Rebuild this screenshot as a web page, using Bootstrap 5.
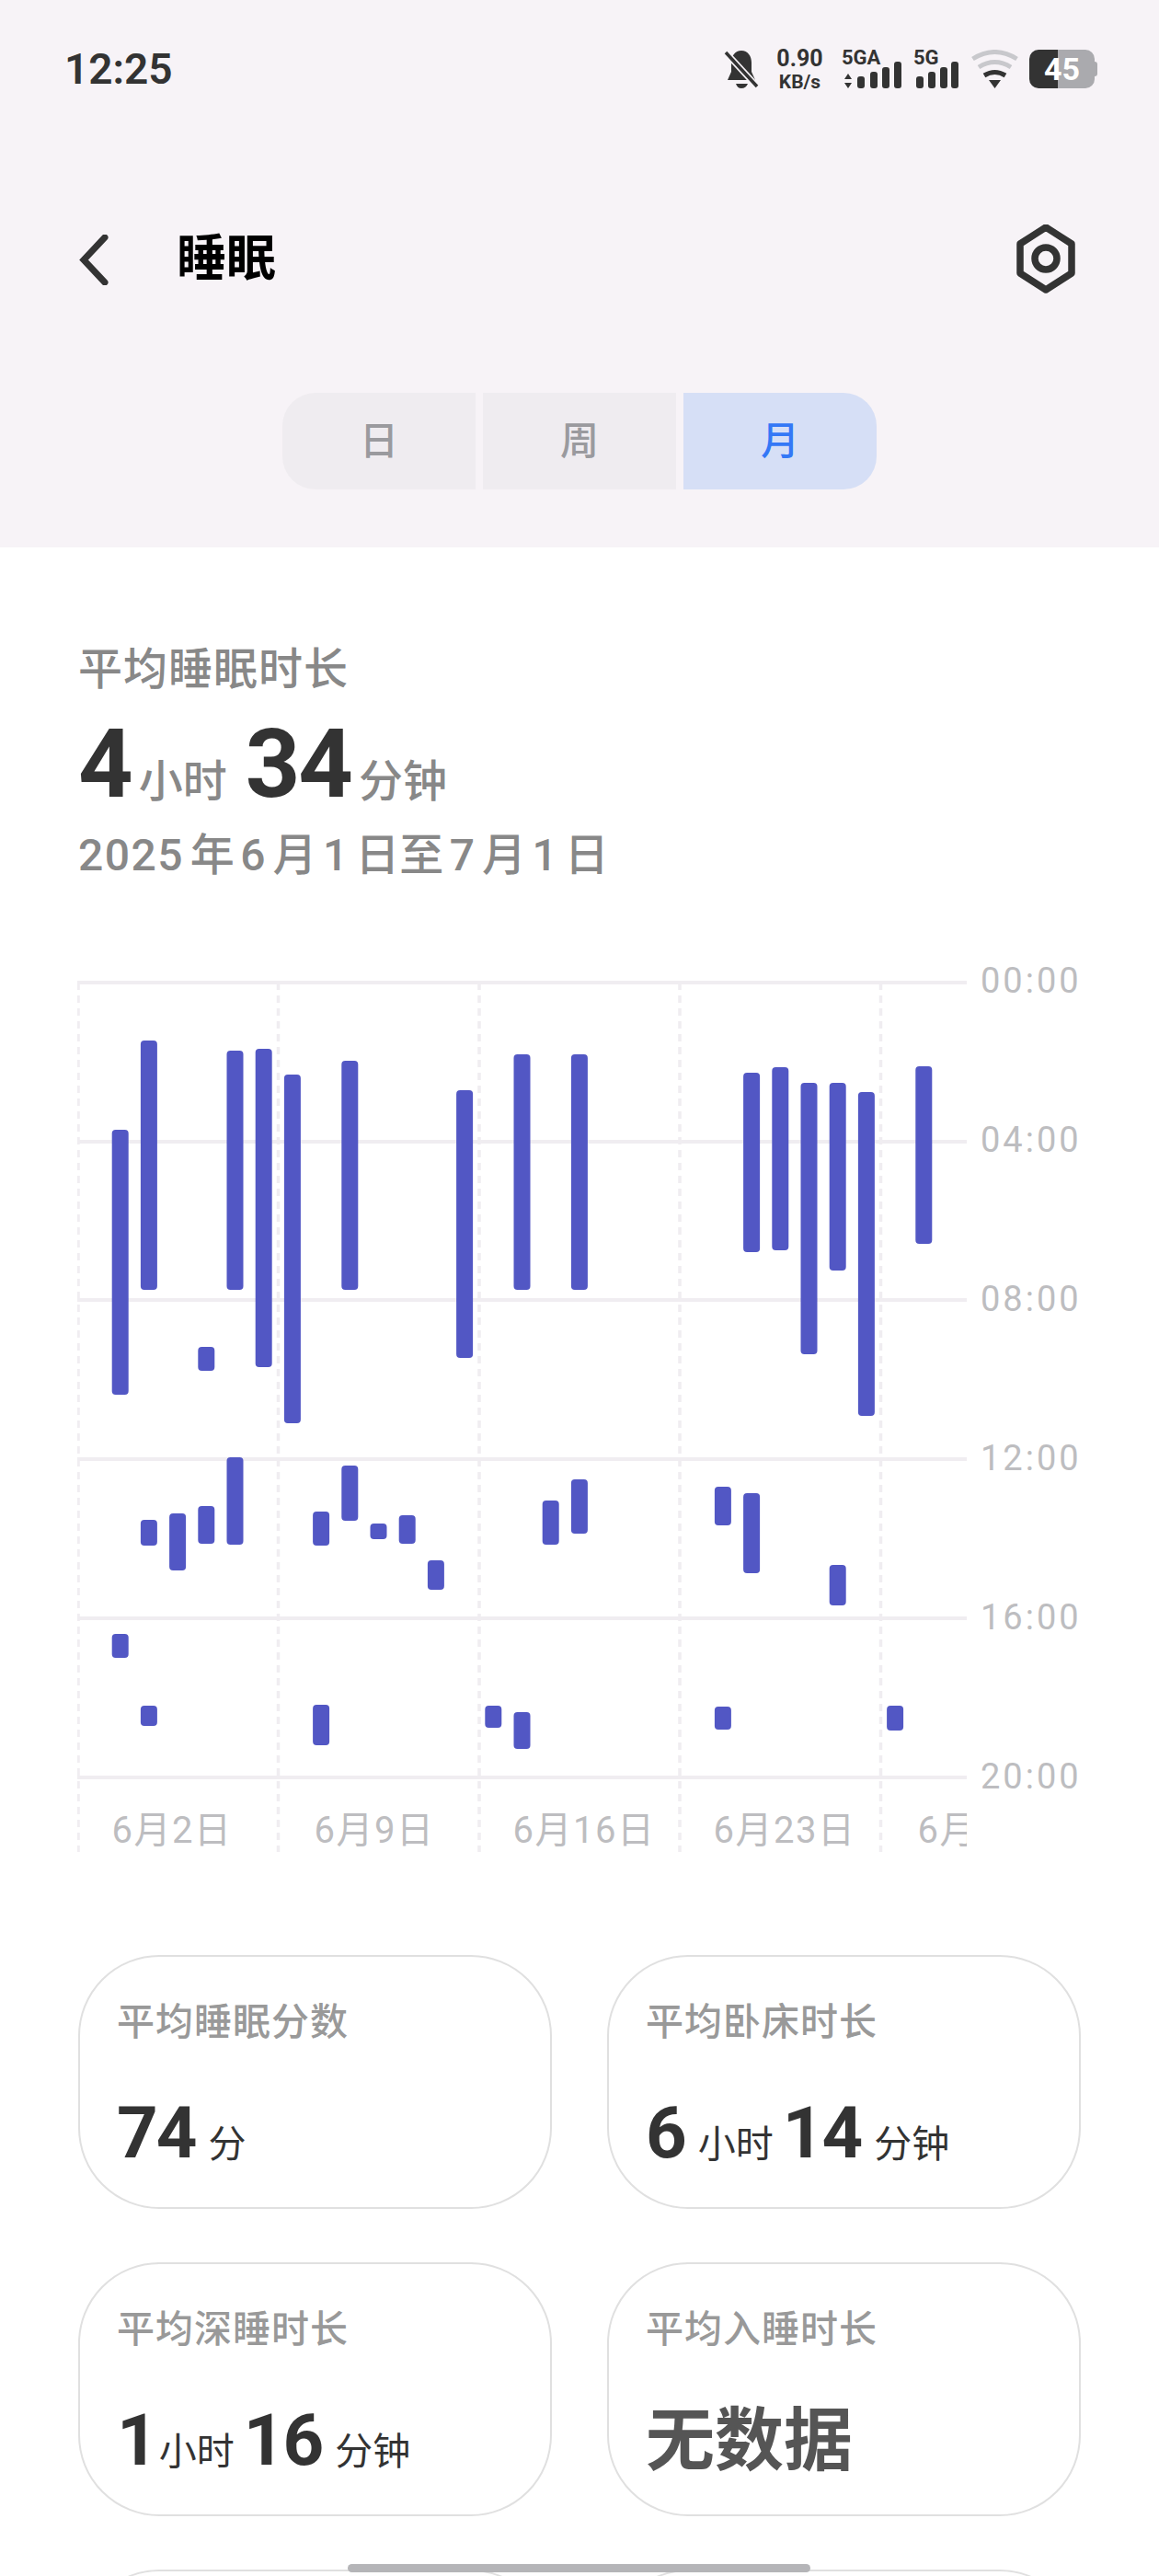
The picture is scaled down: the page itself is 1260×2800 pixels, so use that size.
<!DOCTYPE html>
<html lang="zh-CN">
<head>
    <meta charset="UTF-8">
    <meta name="viewport" content="width=device-width, initial-scale=1.0">
    <title>睡眠</title>
    <link href="https://cdn.jsdelivr.net/npm/bootstrap@5.3.2/dist/css/bootstrap.min.css" rel="stylesheet">
    <style>
        body {
            margin: 0;
            background: #fff;
            font-family: Roboto, "Noto Sans CJK SC", sans-serif;
            color: #333;
        }
        .phone {
            position: relative;
            width: 1260px;
            height: 2800px;
            overflow: hidden;
        }
        .top-area {
            background: #f7f3f7;
            height: 595px;
            padding-top: 54px;
        }
        .status-bar {
            height: 42px;
            padding: 0 70px;
        }
        .clock {
            font-size: 46px;
            line-height: 42px;
            font-weight: 600;
            color: #333;
        }
        .bell-icon { margin-right: 17px; }
        .speed {
            width: 55px;
            margin-right: 18px;
            padding-top: 2px;
            font-weight: 700;
            color: #333;
            text-align: center;
        }
        .speed-num { font-size: 25px; line-height: 20px; }
        .speed-unit { font-size: 21px; line-height: 20px; margin-top: 5px; }
        .net-a { width: 65px; margin-right: 13px; }
        .net-b { width: 49px; margin-right: 14px; }
        .net-text {
            height: 18px;
            font-size: 22px;
            line-height: 18px;
            font-weight: 700;
            color: #333;
        }
        .net-bars {
            display: block;
            overflow: visible;
        }
        .wifi-icon { margin-right: 12px; }
        .battery {
            position: relative;
            width: 71px;
            height: 42px;
            border-radius: 10px;
            background: linear-gradient(90deg, #333 31px, #aaaaae 31px);
            color: #fff;
            font-size: 34px;
            font-weight: 700;
            line-height: 42px;
            text-align: center;
        }
        .battery::after {
            content: "";
            position: absolute;
            right: -3px;
            top: 13px;
            width: 3px;
            height: 16px;
            border-radius: 0 3px 3px 0;
            background: #aaaaae;
        }
        .title-row {
            height: 76px;
            margin-top: 148px;
            padding: 0 91px 0 86px;
        }
        .page-title {
            margin: 0 0 0 73px;
            font-size: 54px;
            line-height: 76px;
            font-weight: 700;
            color: #000;
        }
        .range-tabs {
            margin-top: 107px;
            gap: 8px;
        }
        .range-tab {
            width: 210px;
            height: 105px;
            padding: 0;
            border: 0;
            border-radius: 0;
            background: #efecf0;
            color: #9a9a9e;
            font-size: 42px;
            font-weight: 500;
            line-height: 105px;
        }
        .range-tab:first-child { border-radius: 36px 0 0 36px; }
        .range-tab:last-child { border-radius: 0 36px 36px 0; }
        .range-tab.active,
        .range-tab.active:hover {
            background: #d6dff6;
            color: #3478f6;
        }
        .main-area { padding: 103px 85px 0; }
        .sum-label {
            font-size: 48px;
            font-weight: 500;
            line-height: 60px;
            letter-spacing: 1px;
            color: #888;
        }
        .sum-value {
            height: 104px;
            margin-top: 21px;
        }
        .sum-num {
            font-size: 104px;
            line-height: 104px;
            font-weight: 700;
            letter-spacing: -2px;
            color: #333;
        }
        .sum-unit {
            margin: 0 20px 0 8px;
            font-size: 48px;
            font-weight: 500;
            line-height: 60px;
            color: #888;
        }
        .sum-date {
            margin-top: 17px;
            font-size: 48px;
            font-weight: 500;
            line-height: 60px;
            color: #888;
        }
        .sum-date span {
            margin: 0 6.5px;
            letter-spacing: 1.5px;
        }
        .sum-date span:first-child { margin-left: 0; }
        .chart-wrap {
            margin: 80px -85px 0 -1px;
        }
        .chart-svg { display: block; }
        .chart-date {
            font-family: Roboto, "Noto Sans CJK SC", sans-serif;
            font-size: 40px;
            letter-spacing: 1.5px;
            fill: #bdbdc0;
        }
        .axis-col {
            margin-left: 15px;
            padding-top: 4px;
            gap: 129px;
            font-size: 38px;
            line-height: 44px;
            letter-spacing: 3px;
            color: #bdbdc0;
        }
        .stat-grid {
            grid-template-columns: 515px 515px;
            gap: 58px 60px;
            margin-top: 112px;
        }
        .stat-card {
            height: 276px;
            padding: 46px 40px 0;
            border: 2px solid #e0e0e0;
            border-radius: 88px;
        }
        .stat-label {
            font-size: 41px;
            font-weight: 500;
            line-height: 50px;
            letter-spacing: 1px;
            color: #999;
        }
        .stat-value {
            height: 90px;
            margin-top: 51px;
        }
        .stat-num {
            font-size: 78px;
            line-height: 90px;
            font-weight: 700;
            letter-spacing: -2px;
            color: #333;
        }
        .stat-num-one { margin-right: -11px; }
        .stat-unit {
            margin: 0 10px 0 14px;
            font-size: 41px;
            line-height: 50px;
            color: #333;
        }
        .stat-none {
            font-size: 75px;
            line-height: 90px;
            font-weight: 700;
            color: #555;
        }
        .gesture-pill {
            position: absolute;
            left: 378px;
            top: 2787px;
            width: 503px;
            height: 9px;
            border-radius: 5px;
            background: #b5b5b8;
        }
    </style>
</head>
<body>
    <div class="phone">
        <div class="top-area">
            <div class="status-bar d-flex align-items-center justify-content-between">
                <div class="clock">12:25</div>
                <div class="d-flex align-items-center">
                    <svg class="bell-icon" width="38" height="42" viewBox="0 0 36 42">
                        <path d="M18 1C25 1 29 7 29 14V24L33 33H3L7 24V14C7 7 11 1 18 1Z" fill="#333"/>
                        <path d="M12 37H25C24 40 21 42 18 42C15 42 13 40 12 37Z" fill="#333"/>
                        <line x1="1" y1="3" x2="35" y2="40" stroke="#f7f3f7" stroke-width="7"/>
                        <line x1="1" y1="3" x2="35" y2="40" stroke="#333" stroke-width="3.5"/>
                    </svg>
                    <div class="speed">
                        <div class="speed-num">0.90</div>
                        <div class="speed-unit">KB/s</div>
                    </div>
                    <div class="net-a">
                        <div class="net-text">5GA</div>
                        <svg class="net-bars" width="65" height="24" viewBox="0 18 65 24">
                            <path d="M7 26L11 32H3ZM7 42L3 36H11Z" fill="#333"/>
                            <rect x="17" y="29" width="8" height="13" rx="3" fill="#333"/>
                            <rect x="31" y="24" width="8" height="18" rx="3" fill="#333"/>
                            <rect x="44" y="19" width="8" height="23" rx="3" fill="#333"/>
                            <rect x="57" y="13" width="8" height="29" rx="3" fill="#333"/>
                        </svg>
                    </div>
                    <div class="net-b">
                        <div class="net-text">5G</div>
                        <svg class="net-bars" width="49" height="24" viewBox="0 18 49 24">
                            <rect x="3" y="29" width="8" height="13" rx="3" fill="#333"/>
                            <rect x="16" y="24" width="8" height="18" rx="3" fill="#333"/>
                            <rect x="29" y="19" width="8" height="23" rx="3" fill="#333"/>
                            <rect x="41" y="13" width="8" height="29" rx="3" fill="#333"/>
                        </svg>
                    </div>
                    <svg class="wifi-icon" width="51" height="42" viewBox="0 0 51 42">
                        <path d="M1.5 10Q25.5 -5 49.5 10" fill="none" stroke="#c8c8cc" stroke-width="5"/>
                        <path d="M8 19Q25.5 8 43 19" fill="none" stroke="#c8c8cc" stroke-width="5"/>
                        <path d="M14 28Q25.5 21 37 28" fill="none" stroke="#333" stroke-width="5"/>
                        <path d="M19 33H32L25.5 42Z" fill="#333"/>
                    </svg>
                    <div class="battery">45</div>
                </div>
            </div>
            <div class="title-row d-flex align-items-center">
                <svg width="33" height="55" viewBox="0 0 33 55">
                    <polyline points="28,3 5,27.5 28,52" fill="none" stroke="#333" stroke-width="7" stroke-linecap="round"/>
                </svg>
                <h1 class="page-title flex-grow-1">睡眠</h1>
                <svg width="64" height="76" viewBox="0 1 64 76">
                    <polygon points="32,4 60,22 60,54 32,72 4,54 4,22" fill="none" stroke="#333" stroke-width="7.5" stroke-linejoin="round"/>
                    <circle cx="32" cy="38" r="12" fill="none" stroke="#333" stroke-width="7.5"/>
                </svg>
            </div>
            <div class="range-tabs d-flex justify-content-center">
                <button class="btn range-tab" type="button">日</button>
                <button class="btn range-tab" type="button">周</button>
                <button class="btn range-tab active" type="button">月</button>
            </div>
        </div>

        <div class="main-area">
            <div class="sum-label">平均睡眠时长</div>
            <div class="sum-value d-flex align-items-baseline">
                <span class="sum-num">4</span><span class="sum-unit">小时</span>
                <span class="sum-num">34</span><span class="sum-unit">分钟</span>
            </div>
            <div class="sum-date"><span>2025</span>年<span>6</span>月<span>1</span>日至<span>7</span>月<span>1</span>日</div>

            <div class="chart-wrap d-flex">
                <svg class="chart-svg" id="sleepChart" width="967" height="973" viewBox="84 1040 967 973"></svg>
                <div class="axis-col d-flex flex-column">
                    <div>00:00</div>
                    <div>04:00</div>
                    <div>08:00</div>
                    <div>12:00</div>
                    <div>16:00</div>
                    <div>20:00</div>
                </div>
            </div>

            <div class="stat-grid d-grid">
                <div class="card stat-card">
                    <div class="stat-label">平均睡眠分数</div>
                    <div class="stat-value d-flex align-items-baseline">
                        <span class="stat-num">74</span><span class="stat-unit">分</span>
                    </div>
                </div>
                <div class="card stat-card">
                    <div class="stat-label">平均卧床时长</div>
                    <div class="stat-value d-flex align-items-baseline">
                        <span class="stat-num">6</span><span class="stat-unit">小时</span>
                        <span class="stat-num">14</span><span class="stat-unit">分钟</span>
                    </div>
                </div>
                <div class="card stat-card">
                    <div class="stat-label">平均深睡时长</div>
                    <div class="stat-value d-flex align-items-baseline">
                        <span class="stat-num stat-num-one">1</span><span class="stat-unit">小时</span>
                        <span class="stat-num">16</span><span class="stat-unit">分钟</span>
                    </div>
                </div>
                <div class="card stat-card">
                    <div class="stat-label">平均入睡时长</div>
                    <div class="stat-value d-flex align-items-baseline">
                        <span class="stat-none">无数据</span>
                    </div>
                </div>
                <div class="card stat-card"></div>
                <div class="card stat-card"></div>
            </div>
        </div>

        <div class="gesture-pill"></div>
    </div>

    <script src="https://cdn.jsdelivr.net/npm/bootstrap@5.3.2/dist/js/bootstrap.bundle.min.js"></script>
    <script>
        // day index, top, bottom (screen px, the svg viewBox uses the same numbers)
        const sleepBars = [
            [0, 1228, 1516], [1, 1131, 1402], [4, 1142, 1402], [5, 1140, 1486], [6, 1168, 1547],
            [8, 1153, 1402], [12, 1185, 1476], [14, 1146, 1402], [16, 1146, 1402],
            [22, 1166, 1361], [23, 1160, 1359], [24, 1177, 1472], [25, 1177, 1381], [26, 1187, 1539],
            [28, 1159, 1352], [3, 1464, 1490],
            [1, 1652, 1680], [2, 1645, 1707], [3, 1637, 1678], [4, 1584, 1679],
            [7, 1643, 1680], [8, 1593, 1653], [9, 1656, 1673], [10, 1647, 1678], [11, 1696, 1728],
            [15, 1631, 1679], [16, 1608, 1667], [21, 1616, 1658], [22, 1623, 1710], [25, 1701, 1745],
            [0, 1776, 1802], [1, 1854, 1876], [7, 1853, 1897], [13, 1854, 1878], [14, 1861, 1901],
            [21, 1855, 1880], [27, 1854, 1881]
        ];
        const gridY = [1068, 1241, 1413, 1586, 1759, 1932];
        const gridX = [85, 302.5, 521, 739, 957.5];
        const dateLabels = [['6月2日', 187], ['6月9日', 407], ['6月16日', 635], ['6月23日', 853], ['6月30日', 1075]];

        let svg = '';
        gridX.forEach(x => {
            svg += `<line x1="${x}" y1="1068" x2="${x}" y2="2013" stroke="#f0edf1" stroke-width="3.5" stroke-dasharray="8 6"/>`;
        });
        gridY.forEach(y => {
            svg += `<line x1="84" y1="${y}" x2="1051" y2="${y}" stroke="#f0edf1" stroke-width="4"/>`;
        });
        sleepBars.forEach(([day, top, bottom]) => {
            const x = 121.7 + day * 31.2;
            svg += `<rect x="${x}" y="${top}" width="18" height="${bottom - top}" rx="4" fill="#5257c4"/>`;
        });
        dateLabels.forEach(([text, x]) => {
            svg += `<text class="chart-date" x="${x}" y="2003" text-anchor="middle">${text}</text>`;
        });
        document.getElementById('sleepChart').innerHTML = svg;
    </script>
</body>
</html>
